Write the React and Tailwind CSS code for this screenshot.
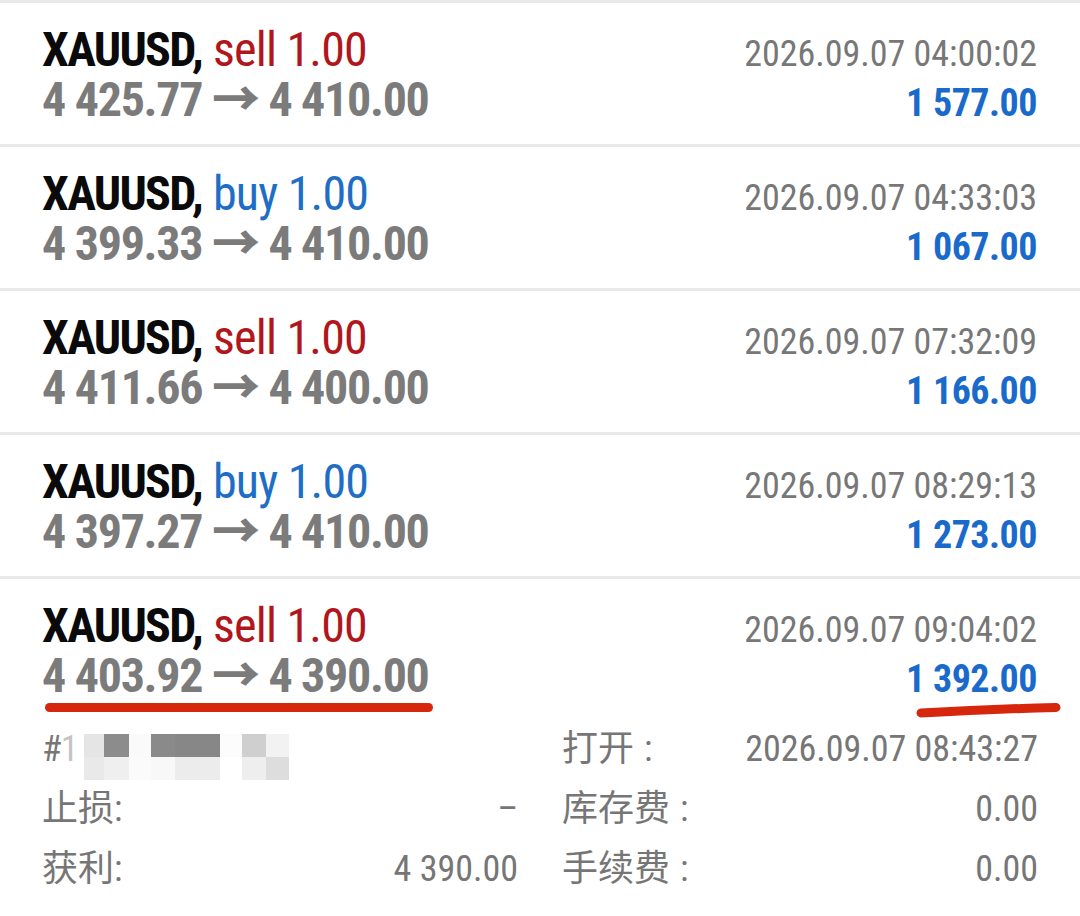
const trades = [
  { side: "sell", open: "4 425.77", close: "4 410.00", time: "2026.09.07 04:00:02", profit: "1 577.00" },
  { side: "buy", open: "4 399.33", close: "4 410.00", time: "2026.09.07 04:33:03", profit: "1 067.00" },
  { side: "sell", open: "4 411.66", close: "4 400.00", time: "2026.09.07 07:32:09", profit: "1 166.00" },
  { side: "buy", open: "4 397.27", close: "4 410.00", time: "2026.09.07 08:29:13", profit: "1 273.00" },
  { side: "sell", open: "4 403.92", close: "4 390.00", time: "2026.09.07 09:04:02", profit: "1 392.00" },
];

const mosaicTop = ["#e5e5e5", "#8c8c8c", "#fafafa", "#8a8a8a", "#878787", "#fcfcfc", "#cfcfcf", "#f2f2f2"];
const mosaicBottom = ["#e9e9e9", "#efefef", "#fbfbfb", "#f8f8f8", "#ececec", "#ffffff", "#eeeeee", "#dddddd"];
const mosaicWidths = [20, 25, 22, 24, 45, 22, 24, 23];

function TradeRow({ trade, last }) {
  return (
    <div className={`border-t-[3px] border-[#e8e8e8] px-[42px] pt-[22px] ${last ? "pb-[12px]" : "h-[144px]"}`}>
      <div className="flex h-[50px] items-baseline justify-between leading-[50px]">
        <div className="text-[48px]">
          <span className="font-bold tracking-[-1.7px] text-[#0a0a0a]">XAUUSD,</span>{" "}
          <span className={`tracking-[-0.8px] ${trade.side === "sell" ? "text-[#b0161b]" : "text-[#1e6ec6]"}`}>
            {trade.side} 1.00
          </span>
        </div>
        <div className="pr-px text-[36px] text-[#777777]">{trade.time}</div>
      </div>
      <div className="flex h-[50px] items-baseline justify-between leading-[50px]">
        <div className="text-[48px] font-bold tracking-[-1.3px] text-[#7b7b7b]">
          {trade.open} <span className="font-black">→</span> {trade.close}
        </div>
        <div className="pr-px text-[38px] font-bold tracking-[-0.5px] text-[#1a6acb]">{trade.profit}</div>
      </div>
    </div>
  );
}

function Mosaic() {
  return (
    <div className="ml-[6px] mt-[15px] flex flex-col self-start">
      {[mosaicTop, mosaicBottom].map((row, r) => (
        <div key={r} className="flex">
          {row.map((c, i) => (
            <div
              key={i}
              className="h-[23px]"
              style={{ width: mosaicWidths[i], backgroundColor: c }}
            />
          ))}
        </div>
      ))}
    </div>
  );
}

function Detail({ label, value }) {
  return (
    <div className="flex h-[60px] items-center justify-between">
      <span>{label}</span>
      <span>{value}</span>
    </div>
  );
}

export default function App() {
  return (
    <div className="relative h-[916px] w-[1080px] overflow-hidden bg-white font-['Roboto_Condensed',Roboto,'Noto_Sans_CJK_SC',sans-serif] font-stretch-condensed">
      {trades.map((t, i) => (
        <TradeRow key={i} trade={t} last={i === trades.length - 1} />
      ))}

      <div className="grid grid-cols-2 gap-x-[44px] px-[42px] pt-[6px] text-[36px] leading-[60px] text-[#767676]">
        <div>
          <div className="flex h-[60px]">
            <span className="tracking-[-1px]">#<span className="text-[#c4c4c4]">1</span></span>
            <Mosaic />
          </div>
          <Detail label="止损:" value="–" />
          <Detail label="获利:" value="4 390.00" />
        </div>
        <div>
          <Detail label={<>打开<span className="ml-[10px]">:</span></>} value="2026.09.07 08:43:27" />
          <Detail label={<>库存费<span className="ml-[10px]">:</span></>} value="0.00" />
          <Detail label={<>手续费<span className="ml-[10px]">:</span></>} value="0.00" />
        </div>
      </div>

      {/* red marker strokes drawn over the screenshot */}
      <svg className="pointer-events-none absolute left-0 top-0" width="1080" height="916">
        <line x1="49.5" y1="707.5" x2="428.5" y2="707.5" stroke="#d6270d" strokeWidth="9" strokeLinecap="round" />
        <path d="M921 713 Q990 709 1056 707.5" fill="none" stroke="#d6270d" strokeWidth="9" strokeLinecap="round" />
      </svg>
    </div>
  );
}
